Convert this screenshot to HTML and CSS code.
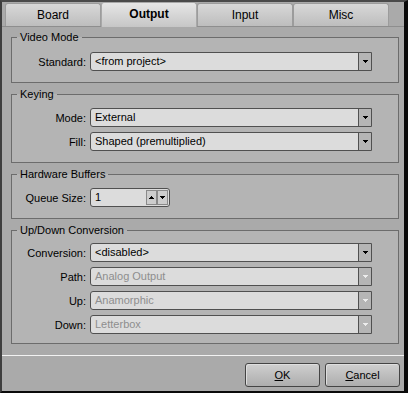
FILE: index.html
```html
<!DOCTYPE html>
<html>
<head>
<meta charset="utf-8">
<title>Output</title>
<link rel="stylesheet" href="styles.css">
</head>
<body>
<div class="window">
  <div class="tabs">
    <div class="tab">Board</div>
    <div class="tab active">Output</div>
    <div class="tab">Input</div>
    <div class="tab">Misc</div>
  </div>
  <div class="pane">
    <fieldset class="group group-first">
      <legend>Video Mode</legend>
      <div class="rows">
        <label>Standard:</label>
        <div class="combo"><span class="val">&lt;from project&gt;</span><span class="drop"><svg width="5" height="3" viewBox="0 0 5 3" shape-rendering="crispEdges"><rect x="0" y="0" width="5" height="1"/><rect x="1" y="1" width="3" height="1"/><rect x="2" y="2" width="1" height="1"/></svg></span></div>
      </div>
    </fieldset>
    <fieldset class="group">
      <legend>Keying</legend>
      <div class="rows">
        <label>Mode:</label>
        <div class="combo"><span class="val">External</span><span class="drop"><svg width="5" height="3" viewBox="0 0 5 3" shape-rendering="crispEdges"><rect x="0" y="0" width="5" height="1"/><rect x="1" y="1" width="3" height="1"/><rect x="2" y="2" width="1" height="1"/></svg></span></div>
        <label>Fill:</label>
        <div class="combo"><span class="val">Shaped (premultiplied)</span><span class="drop"><svg width="5" height="3" viewBox="0 0 5 3" shape-rendering="crispEdges"><rect x="0" y="0" width="5" height="1"/><rect x="1" y="1" width="3" height="1"/><rect x="2" y="2" width="1" height="1"/></svg></span></div>
      </div>
    </fieldset>
    <fieldset class="group">
      <legend>Hardware Buffers</legend>
      <div class="rows">
        <label>Queue Size:</label>
        <div class="spin"><span class="val">1</span>
          <span class="spin-btn"><svg width="5" height="3" viewBox="0 0 5 3" shape-rendering="crispEdges"><rect x="2" y="0" width="1" height="1"/><rect x="1" y="1" width="3" height="1"/><rect x="0" y="2" width="5" height="1"/></svg></span>
          <span class="spin-btn"><svg width="5" height="3" viewBox="0 0 5 3" shape-rendering="crispEdges"><rect x="0" y="0" width="5" height="1"/><rect x="1" y="1" width="3" height="1"/><rect x="2" y="2" width="1" height="1"/></svg></span>
        </div>
      </div>
    </fieldset>
    <fieldset class="group group-last">
      <legend>Up/Down Conversion</legend>
      <div class="rows">
        <label>Conversion:</label>
        <div class="combo"><span class="val">&lt;disabled&gt;</span><span class="drop"><svg width="5" height="3" viewBox="0 0 5 3" shape-rendering="crispEdges"><rect x="0" y="0" width="5" height="1"/><rect x="1" y="1" width="3" height="1"/><rect x="2" y="2" width="1" height="1"/></svg></span></div>
        <label>Path:</label>
        <div class="combo disabled"><span class="val">Analog Output</span><span class="drop"><svg width="5" height="3" viewBox="0 0 5 3" shape-rendering="crispEdges"><rect x="0" y="0" width="5" height="1"/><rect x="1" y="1" width="3" height="1"/><rect x="2" y="2" width="1" height="1"/></svg></span></div>
        <label>Up:</label>
        <div class="combo disabled"><span class="val">Anamorphic</span><span class="drop"><svg width="5" height="3" viewBox="0 0 5 3" shape-rendering="crispEdges"><rect x="0" y="0" width="5" height="1"/><rect x="1" y="1" width="3" height="1"/><rect x="2" y="2" width="1" height="1"/></svg></span></div>
        <label>Down:</label>
        <div class="combo disabled"><span class="val">Letterbox</span><span class="drop"><svg width="5" height="3" viewBox="0 0 5 3" shape-rendering="crispEdges"><rect x="0" y="0" width="5" height="1"/><rect x="1" y="1" width="3" height="1"/><rect x="2" y="2" width="1" height="1"/></svg></span></div>
      </div>
    </fieldset>
  </div>
  <div class="sep"></div>
  <div class="buttons">
    <button class="btn"><u>O</u>K</button>
    <button class="btn"><u>C</u>ancel</button>
  </div>
</div>
</body>
</html>
```

FILE: styles.css
```css
* { box-sizing: border-box; }
html, body { margin: 0; padding: 0; }
body {
  width: 408px;
  height: 393px;
  font: 11px "Liberation Sans", Arial, sans-serif;
  color: #000;
  background: #aaaaaa;
}
.window {
  width: 408px;
  height: 393px;
  border-left: 2px solid #3e3e3e;
  border-top: 2px solid #4a4a4a;
  border-right: 4px solid #0a0a0a;
  border-bottom: 2px solid #0a0a0a;
  background: #aaaaaa;
  display: flex;
  flex-direction: column;
}
.tabs {
  display: flex;
  align-items: flex-end;
  height: 25px;
  padding-left: 3px;
  border-bottom: 1px solid #8e8e8e;
}
.tab {
  width: 96px;
  height: 23px;
  line-height: 22px;
  text-align: center;
  font-size: 12px;
  background: linear-gradient(#d8d8d8, #bdbdbd);
  border: 1px solid #9c9c9c;
  border-bottom: none;
  border-radius: 3px 3px 0 0;
}
.tab.active {
  height: 25px;
  margin-bottom: -1px;
  line-height: 23px;
  font-weight: bold;
  background: linear-gradient(#e6e6e6, #c6c6c6);
  border-color: #a8a8a8;
}
.pane {
  padding: 4px 5px 0 9px;
}
.group {
  margin: 0 0 5px 0;
  padding: 7px 0 11px 0;
  border: 1px solid #6c6c6c;
  background: #b4b4b4;
  min-width: 0;
}
.group-first { padding-top: 8px; }
.group-last { padding-top: 6px; padding-bottom: 9px; margin-bottom: 0; }
.group legend {
  padding: 0 3px;
  margin-left: 5px;
  line-height: 13px;
  height: 13px;
}
.rows {
  display: grid;
  grid-template-columns: 74px 282px;
  column-gap: 4px;
  row-gap: 5px;
  align-items: center;
}
.rows label { text-align: right; }
.combo {
  display: flex;
  height: 19px;
  border: 1px solid #505050;
  border-radius: 3px 0 0 3px;
  background: #dcdcdc;
}
.combo .val {
  flex: 1;
  padding-left: 4px;
  line-height: 17px;
  white-space: nowrap;
}
.drop {
  width: 13px;
  border-left: 1px solid #505050;
  background: #b5b5b5;
  display: flex;
  align-items: center;
  justify-content: center;
}
.drop svg { fill: #000; display: block; }
.combo.disabled .val { color: #8e8e8e; }
.combo.disabled .drop svg { fill: #ececec; }
.spin {
  display: flex;
  align-items: center;
  width: 80px;
  height: 19px;
  border: 1px solid #505050;
  border-radius: 3px;
  background: #dcdcdc;
  padding-right: 1px;
}
.spin .val {
  flex: 1;
  padding-left: 4px;
  line-height: 17px;
}
.spin-btn {
  width: 11px;
  height: 15px;
  border: 1px solid #8a8a8a;
  background: #cdcdcd;
  display: flex;
  align-items: center;
  justify-content: center;
}
.spin-btn svg { fill: #000; display: block; }
.sep {
  margin-top: 11px;
  height: 1px;
  background: #f2f2f2;
}
.buttons {
  display: flex;
  justify-content: flex-end;
  gap: 5px;
  margin-top: 7px;
  padding-right: 4px;
}
.btn {
  width: 75px;
  height: 24px;
  padding: 0;
  font: 11px "Liberation Sans", Arial, sans-serif;
  color: #000;
  background: linear-gradient(#cfcfcf, #adadad);
  border: 1px solid #444;
  border-radius: 3px;
  box-shadow: inset 1px 1px 0 #dedede;
}
```
